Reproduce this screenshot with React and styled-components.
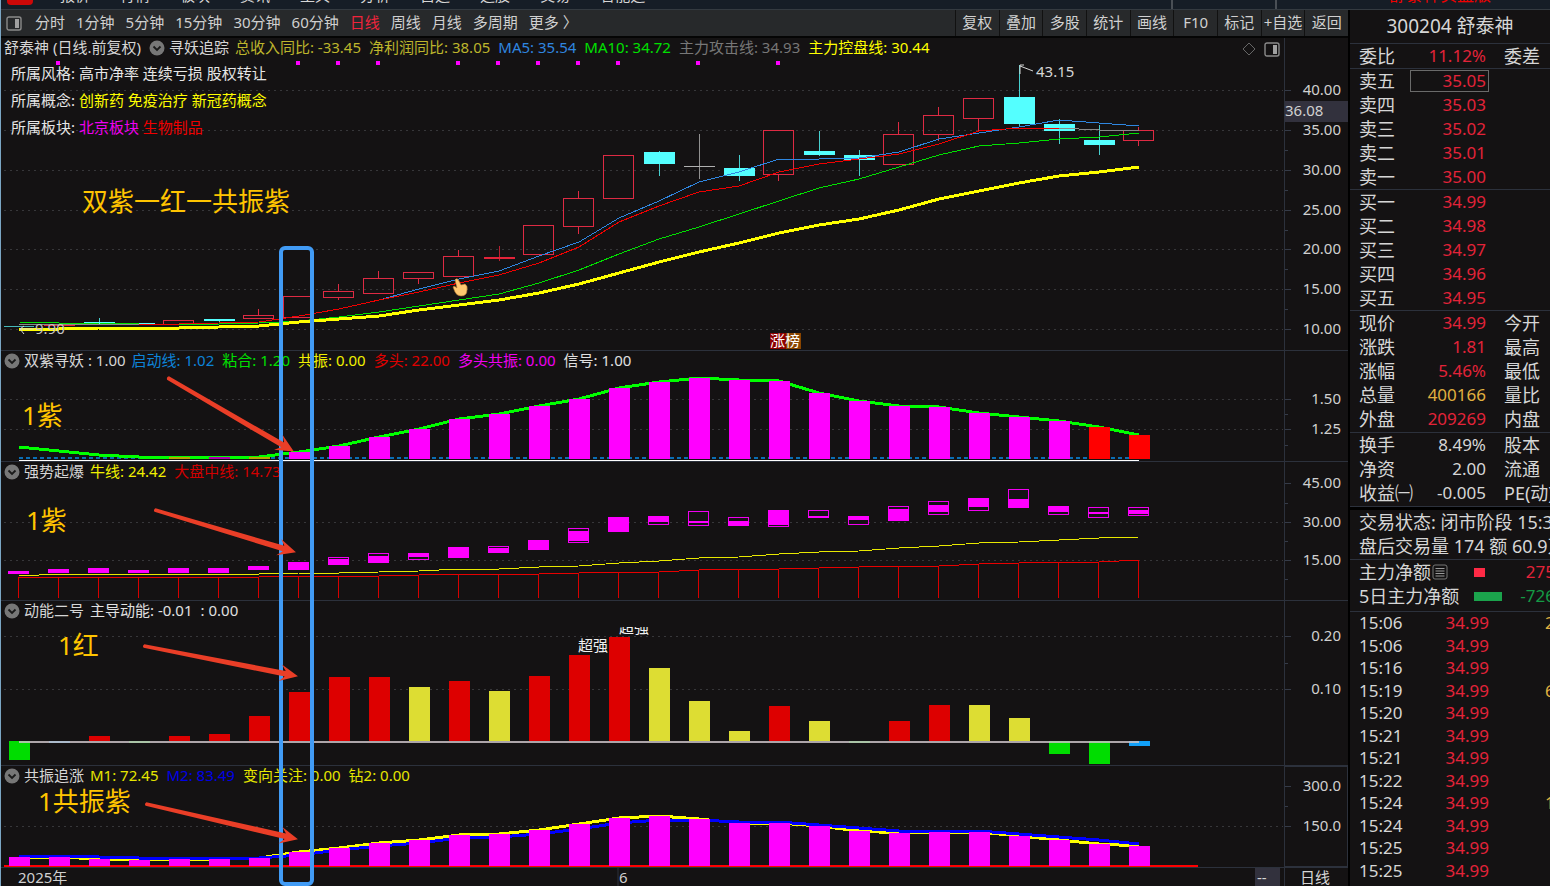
import React from "react";
import styled, { createGlobalStyle } from "styled-components";

const FONT = '"Noto Sans", "Noto Sans CJK SC", sans-serif';

const GlobalStyle = createGlobalStyle`
    * { box-sizing: border-box; }
    body {
        margin: 0;
        background: #000;
        overflow: hidden;
        font-family: ${FONT};
    }
    button {
        font-family: inherit;
    }
`;

const menus = ["报价", "行情", "板块", "资讯", "工具", "分析", "自选", "选股", "交易", "智能选"];

const periods = ["分时", "1分钟", "5分钟", "15分钟", "30分钟", "60分钟", "日线", "周线", "月线", "多周期", "更多 〉"];

const tools = ["复权", "叠加", "多股", "统计", "画线", "F10", "标记", "+自选", "返回"];

const RED = "#e32339";
const UP = "#de2a43";
const DOWN = "#54ffff";
const PURPLE = "#ff00ff";

// x of the n-th trading day
const cx = (i) => 19 + i * 40;

// kind, body top, body bottom, wick top, wick bottom
const candles = [
    ["none", 0, 0, 0, 0],
    ["flat", 325, 326, 325, 326],
    ["down", 322, 324, 318, 324],
    ["down", 323, 324, 323, 324],
    ["up", 320, 324, 320, 324],
    ["down", 319, 321, 319, 323],
    ["up", 315, 318, 309, 318],
    ["up", 296, 317, 296, 317],
    ["up", 291, 297, 284, 300],
    ["up", 278, 293, 271, 293],
    ["up", 272, 278, 272, 284],
    ["up", 256, 276, 250, 276],
    ["flat", 257, 259, 246, 261],
    ["up", 225, 254, 225, 254],
    ["up", 198, 226, 191, 234],
    ["up", 155, 198, 155, 198],
    ["down", 152, 164, 151, 176],
    ["doji", 166, 167, 134, 179],
    ["down", 168, 176, 155, 181],
    ["up", 130, 174, 130, 181],
    ["down", 151, 155, 131, 156],
    ["down", 155, 160, 150, 176],
    ["up", 134, 164, 122, 164],
    ["up", 115, 134, 107, 141],
    ["up", 98, 118, 98, 131],
    ["down", 97, 124, 65, 127],
    ["down", 124, 131, 119, 144],
    ["down", 140, 145, 125, 155],
    ["up", 130, 140, 127, 146],
];

const ma5 = [300, 289, 279, 271, 256, 242, 218, 201, 182, 172, 159, 159, 158, 152, 139, 133, 127, 120, 123, 126];
const attack = [324, 324, 323, 322, 316, 309, 300, 292, 283, 275, 263, 247, 222, 206, 192, 186, 172, 164, 159, 154, 144, 131, 128, 128];
const ma10 = [322, 323, 323, 324, 324, 324, 323, 321, 317, 312, 306, 300, 294, 283, 270, 254, 239, 227, 214, 201, 188, 179, 167, 155, 146, 143, 139, 137, 133];
const control = [329, 329, 328, 328, 328, 327, 326, 322, 319, 316, 310, 305, 300, 293, 284, 273, 262, 252, 243, 233, 225, 219, 210, 199, 191, 183, 176, 172, 167];

const signalDays = [1, 7, 8, 9, 11, 12, 13, 14, 15, 17, 19];

const bondLine = [447, 451, 455, 457, 457, 457, 457, 452, 446, 437, 429, 419, 414, 406, 399, 388, 382, 378, 380, 381, 393, 401, 406, 407, 413, 417, 421, 427, 435];

// outer box top/bottom, filled part top/bottom
const burst = [
    [571, 574, 571, 574], [569, 573, 569, 573], [568, 573, 568, 573], [570, 573, 570, 573],
    [568, 573, 568, 573], [568, 573, 568, 573], [566, 570, 566, 570], [562, 570, 562, 570],
    [557, 565, 559, 565], [553, 563, 556, 563], [553, 560, 553, 557], [547, 558, 547, 558],
    [546, 553, 548, 553], [540, 550, 540, 550], [528, 543, 531, 541], [517, 532, 517, 532],
    [516, 525, 516, 522], [511, 526, 521, 523], [517, 526, 521, 526], [510, 527, 510, 525],
    [510, 518, 516, 518], [516, 525, 516, 520], [506, 521, 509, 521], [501, 515, 505, 512],
    [498, 511, 498, 507], [489, 508, 499, 508], [506, 515, 506, 512], [507, 518, 512, 514],
    [507, 516, 510, 514],
];
const bull = [576, 574, 574, 574, 574, 574, 574, 573, 573, 572, 571, 569, 569, 567, 566, 563, 561, 558, 557, 554, 552, 551, 548, 546, 543, 542, 540, 538, 537];
const midline = [577, 577, 577, 577, 577, 577, 577, 576, 576, 576, 575, 574, 574, 574, 573, 572, 572, 570, 569, 569, 568, 567, 566, 566, 564, 563, 562, 562, 560];

const R = "#dd0000";
const Y = "#dddd33";
const G = "#00dd00";
const B = "#11a0f8";
const power = [
    [760, G], [743, B], [736, R], [743, G], [736, R], [734, R], [716, R], [692, R], [677, R], [677, R],
    [687, Y], [681, R], [691, Y], [676, R], [655, R], [637, R], [668, Y], [701, Y], [731, Y], [706, R],
    [721, Y], [743, G], [721, R], [705, R], [705, Y], [718, Y], [754, G], [764, G], [746, B],
];

const m1 = [857, 857, 859, 860, 859, 859, 858, 852, 848, 843, 840, 835, 834, 830, 824, 818, 816, 819, 823, 823, 826, 831, 833, 832, 832, 836, 840, 844, 846];
const m2 = [856, 856, 857, 858, 858, 858, 858, 855, 850, 846, 843, 838, 837, 834, 829, 823, 820, 820, 822, 822, 825, 828, 831, 831, 831, 834, 837, 840, 844];

const sells = [["卖五", "35.05"], ["卖四", "35.03"], ["卖三", "35.02"], ["卖二", "35.01"], ["卖一", "35.00"]];
const buys = [["买一", "34.99"], ["买二", "34.98"], ["买三", "34.97"], ["买四", "34.96"], ["买五", "34.95"]];
const quotes = [
    ["现价", "34.99", "今开"],
    ["涨跌", "1.81", "最高"],
    ["涨幅", "5.46%", "最低"],
    ["总量", "400166", "量比", "#e0b040"],
    ["外盘", "209269", "内盘"],
];
const basics = [
    ["换手", "8.49%", "股本", "#d6d6d6"],
    ["净资", "2.00", "流通", "#d6d6d6"],
    ["收益㈠", "-0.005", "PE(动)", "#d6d6d6"],
];
const ticks = [
    ["15:06", "2"], ["15:06", ""], ["15:16", ""], ["15:19", "6"], ["15:20", ""], ["15:21", ""], ["15:21", ""],
    ["15:22", ""], ["15:24", "1"], ["15:24", ""], ["15:25", ""], ["15:25", ""], ["15:26", ""],
];

const toPoints = (ys, from = 0) => ys.map((y, i) => `${cx(i + from)},${y}`).join(" ");

function Line({ ys, from, color, width = 1 }) {
    return <polyline points={toPoints(ys, from)} fill="none" stroke={color} strokeWidth={width} />;
}

function Fold() {
    return (
        <FoldIcon viewBox="0 0 16 16">
            <circle cx="8" cy="8" r="7.5" fill="#777" />
            <path d="M4.5 6.5 L8 10 L11.5 6.5" fill="none" stroke="#1a1a1a" strokeWidth="1.8" />
        </FoldIcon>
    );
}

function SideIcon() {
    return (
        <svg width="16" height="15" viewBox="0 0 16 15">
            <rect x="1" y="1" width="14" height="13" rx="2" fill="none" stroke="#8a8a8a" strokeWidth="1.4" />
            <rect x="9" y="3" width="4" height="9" fill="#a0a0a0" />
        </svg>
    );
}

// one indicator window: header, plot and price scale. top is its y on the board
function Pane({ top, height, items, title, name, marks, minors = [], boxed, grid, children, axisExtra, extra }) {
    return (
        <PaneRow>
            <PlotColumn>
                <PaneHeader>
                    {title && <span>{title}</span>}
                    <Fold />
                    <PaneName>{name}</PaneName>
                    {items.map(([text, color]) => (
                        <Reading key={text} $color={color}>{text}</Reading>
                    ))}
                </PaneHeader>
                <Plot height={height - 20}>
                    <g transform={`translate(-1 ${-top - 20})`} shapeRendering="crispEdges">
                        {grid.map((y) => (
                            <line key={y} x1="4" x2="100%" y1={y + 0.5} y2={y + 0.5} stroke="#37373a" strokeDasharray="2 4" />
                        ))}
                        {children}
                    </g>
                </Plot>
                {extra}
            </PlotColumn>
            <Scale $boxed={boxed} height={height}>
                <g transform={`translate(-1285 ${-top})`}>
                    {marks.map(([label, y]) => (
                        <g key={label}>
                            <line x1="1285" x2="1291" y1={y + 0.5} y2={y + 0.5} stroke="#353b48" />
                            <text x="1341" y={y + 5} textAnchor="end">{label}</text>
                        </g>
                    ))}
                    {minors.map((y) => (
                        <line key={y} x1="1285" x2="1288" y1={y + 0.5} y2={y + 0.5} stroke="#353b48" />
                    ))}
                    {axisExtra}
                </g>
            </Scale>
        </PaneRow>
    );
}

function Candle({ i, data }) {
    const [kind, top, bottom, high, low] = data;
    const x = cx(i);
    if (kind === "none") return null;
    if (kind === "up") {
        return (
            <g stroke={UP} fill="none">
                <rect x={x - 16 + 0.5} y={top + 0.5} width="30" height={bottom - top} />
                {high < top && <line x1={x - 0.5} x2={x - 0.5} y1={high} y2={top} />}
                {low > bottom && <line x1={x - 0.5} x2={x - 0.5} y1={bottom} y2={low} />}
            </g>
        );
    }
    const color = kind === "down" ? DOWN : kind === "flat" ? RED : "#b0b0b0";
    return (
        <g fill={color}>
            <rect x={x - 15} y={top} width="31" height={bottom - top} />
            <rect x={x} y={high} width="1" height={low - high} opacity="0.8" />
        </g>
    );
}

function Arrow({ x1, y1, x2, y2 }) {
    const len = Math.hypot(x2 - x1, y2 - y1);
    const deg = (Math.atan2(y2 - y1, x2 - x1) * 180) / Math.PI;
    return (
        <g transform={`translate(${x1} ${y1}) rotate(${deg})`} fill="#ea3e27">
            <path d={`M0 -1.9 L${len - 12} -2.8 L${len - 17} -8.5 L${len + 1} 0 L${len - 17} 8.5 L${len - 12} 2.8 L0 1.9 Q-2 0 0 -1.9Z`} />
        </g>
    );
}

function QuoteRows({ rows }) {
    return rows.map(([label, value, side, color]) => (
        <tr key={label}>
            <Name scope="row">{label}</Name>
            <Value $color={color}>{value}</Value>
            <Side>{side}</Side>
        </tr>
    ));
}

export default function App() {
    return (
        <>
            <GlobalStyle />
            <Window>
                <MenuBar>
                    <Logo />
                    <Menus>
                        {menus.map((m) => <span key={m}>{m}</span>)}
                    </Menus>
                    <MenuGap />
                    <MenuSlot />
                    <Account>舒泰神实盘版</Account>
                </MenuBar>
                <Body>
                    <Main>
                        <Toolbar>
                            <Periods>
                                <IconButton aria-label="侧栏"><SideIcon /></IconButton>
                                {periods.map((p) => (
                                    <PeriodButton key={p} $active={p === "日线"}>{p}</PeriodButton>
                                ))}
                            </Periods>
                            <Tools>
                                {tools.map((t) => <ToolButton key={t}>{t}</ToolButton>)}
                            </Tools>
                        </Toolbar>
                        <Board>
                            <Pane
                                top={38}
                                height={312}
                                title="舒泰神 (日线.前复权)"
                                name="寻妖追踪"
                                items={[
                                    ["总收入同比: -33.45", "#bdb52c"],
                                    ["净利润同比: 38.05", "#bdb52c"],
                                    ["MA5: 35.54", "#2f86e0"],
                                    ["MA10: 34.72", "#00e000"],
                                    ["主力攻击线: 34.93", "#777777"],
                                    ["主力控盘线: 30.44", "#ffff00"],
                                ]}
                                grid={[90, 130, 170, 210, 249, 289, 329]}
                                marks={[["40.00", 90], ["35.00", 130], ["30.00", 170], ["25.00", 210], ["20.00", 249], ["15.00", 289], ["10.00", 329]]}
                                minors={[150, 190, 230, 269, 309]}
                                axisExtra={
                                    <g>
                                        <rect x="1285" y="101" width="63" height="21" fill="#32313d" />
                                        <text x="1285" y="116">36.08</text>
                                    </g>
                                }
                                extra={
                                    <>
                                        <Notes>
                                            <div>所属风格: 高市净率 连续亏损 股权转让</div>
                                            <div>所属概念: <Reading $color="#ffff00">创新药 免疫治疗 新冠药概念</Reading></div>
                                            <div>所属板块: <Reading $color="#f000f0">北京板块</Reading> <Reading $color="#f00000">生物制品</Reading></div>
                                        </Notes>
                                        <Corner>
                                            <svg width="14" height="14" viewBox="0 0 14 14">
                                                <path d="M7 1 L13 7 L7 13 L1 7Z" fill="none" stroke="#666" />
                                            </svg>
                                            <SideIcon />
                                        </Corner>
                                    </>
                                }
                            >
                                {signalDays.map((d) => <rect key={d} x={cx(d) - 3} y="61" width="4" height="4" fill={PURPLE} />)}
                                <rect x="4" y="326" width="30" height="1" fill="#45b8b8" />
                                {candles.map((c, i) => <Candle key={i} i={i} data={c} />)}
                                <Line ys={[324.5, 324.5, 324.5, 324.5]} color="#8a8a8a" />
                                <Line ys={ma5} from={9} color="#2f86e0" />
                                <Line ys={ma10} color="#00e000" />
                                <Line ys={attack} from={3} color="#f00000" />
                                <Line ys={[128, 130, 130]} from={26} color="#8a8a8a" />
                                <Line ys={control} color="#ffff00" width={3} />
                                <path d="M20 329 H34 M20 329 L24 334 M20 329 L24 326" stroke="#d6d6d6" fill="none" shapeRendering="auto" />
                                <text x="35" y="334" fill="#c4c4c4">9.90</text>
                                <path d="M1033 71 L1020 66 M1020 74 V65 H1024" stroke="#d6d6d6" fill="none" shapeRendering="auto" />
                                <text x="1036" y="77" fill="#d6d6d6">43.15</text>
                                <rect x="770" y="333" width="16" height="16" fill="#8b0000" />
                                <rect x="786" y="333" width="15" height="16" fill="#8a4500" />
                                <text x="770" y="346" fill="#fff">涨榜</text>
                            </Pane>

                            <Pane
                                top={351}
                                height={110}
                                name="双紫寻妖 : 1.00"
                                items={[
                                    ["启动线: 1.02", "#0d83d8"],
                                    ["粘合: 1.20", "#00e000"],
                                    ["共振: 0.00", "#f0f000"],
                                    ["多头: 22.00", "#e00000"],
                                    ["多头共振: 0.00", "#f000f0"],
                                    ["信号: 1.00", "#e0e0e0"],
                                ]}
                                grid={[399, 429]}
                                marks={[["1.50", 399], ["1.25", 429]]}
                                minors={[414, 445]}
                            >
                                <line x1="19" x2="1139" y1="458" y2="458" stroke="#0a6eb4" strokeWidth="2" strokeDasharray="4 3" />
                                <Line ys={bondLine} color="#00ff00" width={3} />
                                {bondLine.map((y, i) => (
                                    i > 6 && <rect key={i} x={cx(i) - 10} y={y} width="21" height={459 - y} fill={i > 26 ? "#ff0000" : PURPLE} />
                                ))}
                                <rect x="169" y="457" width="21" height="2" fill="#b8a800" />
                                <rect x="209" y="457" width="21" height="2" fill="#b000b0" />
                                <rect x="249" y="457" width="21" height="2" fill="#b8a800" />
                                <rect x="19" y="460" width="1120" height="1" fill="#ffffff" />
                            </Pane>

                            <Pane
                                top={462}
                                height={138}
                                name="强势起爆"
                                items={[["牛线: 24.42", "#f0f000"], ["大盘中线: 14.73", "#d00000"]]}
                                grid={[522, 560]}
                                marks={[["45.00", 483], ["30.00", 522], ["15.00", 560]]}
                                minors={[503, 541, 579]}
                            >
                                {midline.map((y, i) => <rect key={i} x={cx(i) - 1} y={y} width="1" height={598 - y} fill="#d80000" />)}
                                <Line ys={midline} color="#e80000" />
                                <Line ys={bull} color="#e8e800" />
                                {burst.map(([top, bottom, from, to], i) => (
                                    <g key={i}>
                                        <rect x={cx(i) - 11 + 0.5} y={top + 0.5} width="20" height={bottom - top - 1} fill="#141213" stroke="#f000f0" />
                                        <rect x={cx(i) - 11} y={from} width="21" height={to - from} fill={PURPLE} />
                                    </g>
                                ))}
                            </Pane>

                            <Pane
                                top={601}
                                height={164}
                                name="动能二号"
                                items={[["主导动能: -0.01", "#e0e0e0"], [": 0.00", "#e0e0e0"]]}
                                grid={[636, 689]}
                                marks={[["0.20", 636], ["0.10", 689]]}
                                minors={[663]}
                            >
                                <text x="578" y="651" fill="#f0f0f0">超强</text>
                                <svg x="600" y="627" width="60" height="10">
                                    <text x="19" y="6" fill="#f0f0f0">超强</text>
                                </svg>
                                {power.map(([y, color], i) => (
                                    <rect key={i} x={cx(i) - 10} y={Math.min(y, 741)} width="21" height={Math.abs(y - 741)} fill={color} />
                                ))}
                                <rect x="19" y="741" width="1120" height="2" fill="#c8bfc4" opacity="0.85" />
                            </Pane>

                            <Pane
                                top={766}
                                height={101}
                                name="共振追涨"
                                items={[
                                    ["M1: 72.45", "#e6e600"],
                                    ["M2: 83.49", "#0000e6"],
                                    ["变向关注: 0.00", "#e6e600"],
                                    ["钻2: 0.00", "#e6e600"],
                                ]}
                                grid={[826]}
                                marks={[["300.0", 786], ["150.0", 826]]}
                                minors={[806]}
                                boxed
                            >
                                <Line ys={m1} color="#ffff00" width={3} />
                                <Line ys={m2} color="#0000ff" width={3} />
                                <rect x="4" y="865" width="1194" height="2" fill="#ff0000" />
                                {m1.map((y, i) => <rect key={i} x={cx(i) - 10} y={y} width="21" height={866 - y} fill={PURPLE} />)}
                            </Pane>

                            <TimeRow>
                                <TimePlot height="18">
                                    <text x="17" y="15">2025年</text>
                                    <line x1="617" x2="617" y1="0" y2="18" stroke="#2c313c" />
                                    <text x="618" y="15">6</text>
                                </TimePlot>
                                <TimeCursor>--</TimeCursor>
                                <TimeUnit>日线</TimeUnit>
                            </TimeRow>

                            <Overlay>
                                <g transform="translate(-1 -38)">
                                    <rect x="281" y="248" width="31" height="636" rx="4" fill="none" stroke="#419bf5" strokeWidth="4" />
                                    <Arrow x1={168} y1={378} x2={293} y2={451} />
                                    <Arrow x1={155} y1={510} x2={295} y2={552} />
                                    <Arrow x1={144} y1={646} x2={297} y2={676} />
                                    <Arrow x1={146} y1={804} x2={297} y2={839} />
                                    <path
                                        d="M455 280 Q457 277 459 281 L461 285 L465 284 Q468 286 467 290 Q467 296 461 296 Q457 296 455 292 L453 287 Q454 285 457 288Z"
                                        fill="#ffc870"
                                        stroke="#b87830"
                                        strokeWidth="0.6"
                                    />
                                    <text x="82" y="211">双紫一红一共振紫</text>
                                    <text x="22" y="425">1紫</text>
                                    <text x="26" y="530">1紫</text>
                                    <text x="58" y="655">1红</text>
                                    <text x="38" y="811">1共振紫</text>
                                </g>
                            </Overlay>
                        </Board>
                    </Main>

                    <Panel>
                        <StockTitle>300204 舒泰神</StockTitle>
                        <Section>
                            <DataTable><tbody><QuoteRows rows={[["委比", "11.12%", "委差"]]} /></tbody></DataTable>
                        </Section>
                        <Section>
                            <DataTable>
                                <tbody>
                                    {sells.map(([label, price], i) => (
                                        <tr key={label}>
                                            <Name scope="row">{label}</Name>
                                            <Value>{i === 0 ? <Picked>{price}</Picked> : price}</Value>
                                            <Side />
                                        </tr>
                                    ))}
                                </tbody>
                            </DataTable>
                        </Section>
                        <Section>
                            <DataTable><tbody><QuoteRows rows={buys} /></tbody></DataTable>
                        </Section>
                        <Section $bottom={1}>
                            <DataTable><tbody><QuoteRows rows={quotes} /></tbody></DataTable>
                        </Section>
                        <Section $bottom={1}>
                            <DataTable><tbody><QuoteRows rows={basics} /></tbody></DataTable>
                        </Section>
                        <Divider />
                        <Section $bottom={1}>
                            <StatusLine>交易状态: 闭市阶段 15:30</StatusLine>
                            <StatusLine>盘后交易量 174 额 60.9万</StatusLine>
                        </Section>
                        <Section $bottom={3}>
                            <FlowRow>
                                <FlowName>
                                    主力净额
                                    <svg width="16" height="16" viewBox="0 0 16 16">
                                        <rect x="1" y="1" width="14" height="14" rx="2" fill="none" stroke="#777" />
                                        <path d="M3.5 4.5 H12.5 M3.5 7 H12.5 M3.5 9.5 H12.5 M3.5 12 H12.5" stroke="#999" />
                                    </svg>
                                </FlowName>
                                <Swatch $width={11} $color="#ff2a45" />
                                <FlowValue $color={RED}>275</FlowValue>
                            </FlowRow>
                            <FlowRow>
                                <FlowName>5日主力净额</FlowName>
                                <Swatch $width={28} $color="#1ba34c" />
                                <FlowValue $color="#159a45">-726</FlowValue>
                            </FlowRow>
                        </Section>
                        <TickTable>
                            <tbody>
                                {ticks.map(([time, volume], i) => (
                                    <tr key={i}>
                                        <TickTime>{time}</TickTime>
                                        <TickPrice>34.99</TickPrice>
                                        <TickVolume>{volume}</TickVolume>
                                    </tr>
                                ))}
                            </tbody>
                        </TickTable>
                    </Panel>
                </Body>
            </Window>
        </>
    );
}

const Window = styled.div`
    display: flex;
    flex-direction: column;
    height: 100vh;
    overflow: hidden;
    border-left: 1px solid #7ba6c4;
    color: #d6d6d6;
    font-size: 15px;
    white-space: nowrap;
`;

const MenuBar = styled.div`
    display: flex;
    align-items: flex-end;
    flex: none;
    height: 10px;
    overflow: hidden;
    background: #161d26;
    border-bottom: 1px solid #343a40;
    line-height: 20px;
`;

const Logo = styled.div`
    width: 26px;
    height: 20px;
    margin: 0 27px 4px 6px;
    background: #cc0808;
    border-radius: 4px;
`;

const Menus = styled.div`
    display: flex;
    gap: 30px;
    padding-bottom: 4px;
`;

const MenuGap = styled.div`
    flex: 1;
    height: 9px;
    border-right: 2px solid #4a4f55;
`;

const MenuSlot = styled.div`
    width: 104px;
    height: 9px;
    border-right: 2px solid #4a4f55;
`;

const Account = styled.div`
    width: 273px;
    padding: 0 0 4px 112px;
    color: #f00000;
    font-size: 17px;
`;

const Body = styled.div`
    display: flex;
    flex: 1;
    min-height: 0;
    gap: 2px;
    background: #000;
`;

const Main = styled.div`
    flex: 1;
    min-width: 0;
`;

const Toolbar = styled.div`
    display: flex;
    justify-content: space-between;
    height: 28px;
    background: #27292b;
    border-bottom: 2px solid #050505;
`;

const Periods = styled.div`
    display: flex;
    align-items: center;
    gap: 11px;
    padding-left: 5px;
`;

const IconButton = styled.button`
    display: flex;
    width: 18px;
    padding: 0;
    border: 0;
    background: none;
`;

const PeriodButton = styled.button`
    padding: 0 0 2px;
    border: 0;
    background: none;
    color: ${(p) => (p.$active ? "#f0243c" : "#d0d0d0")};
    font-size: 15px;
    line-height: 24px;
`;

const Tools = styled.div`
    display: grid;
    grid-template-columns: repeat(9, 1fr);
    width: 393px;
`;

const ToolButton = styled.button`
    padding: 0 0 2px;
    border: 0;
    border-left: 1px solid #111;
    background: #27292b;
    color: #d0d0d0;
    font-size: 15px;
    line-height: 24px;
`;

const Board = styled.div`
    position: relative;
    background: #141213;
`;

const PaneRow = styled.div`
    display: grid;
    grid-template-columns: 1fr 64px;
    border-bottom: 1px solid #2c313c;
`;

const PlotColumn = styled.div`
    position: relative;
    min-width: 0;
`;

const PaneHeader = styled.div`
    display: flex;
    align-items: center;
    gap: 8px;
    height: 20px;
    padding-left: 3px;
    line-height: 18px;

    span {
        padding-bottom: 2px;
    }
`;

const PaneName = styled.span`
    margin-right: -2px;
`;

const FoldIcon = styled.svg`
    flex: none;
    width: 16px;
    height: 16px;
    margin-right: -4px;
`;

const Reading = styled.span`
    color: ${(p) => p.$color};
`;

const Plot = styled.svg`
    display: block;
    width: 100%;
    overflow: hidden;
    font-size: 15px;
`;

const Scale = styled.svg`
    display: block;
    width: 64px;
    border-left: 1px solid #2c313c;
    outline: ${(p) => (p.$boxed ? "1px solid #2c313c" : "none")};
    outline-offset: -1px;
    fill: #d0d0d0;
    font-size: 15px;
`;

const Notes = styled.div`
    position: absolute;
    top: 22px;
    left: 10px;
    line-height: 27px;
    color: #e6e6e6;
`;

const Corner = styled.div`
    position: absolute;
    top: 4px;
    right: 4px;
    display: flex;
    gap: 8px;
`;

const TimeRow = styled.div`
    display: flex;
    height: 18px;
    line-height: 18px;
`;

const TimePlot = styled.svg`
    flex: 1;
    min-width: 0;
    fill: #d0d0d0;
    font-size: 15px;
`;

const TimeCursor = styled.div`
    width: 25px;
    margin-right: 4px;
    padding-left: 2px;
    background: #32313d;
`;

const TimeUnit = styled.div`
    width: 64px;
    padding-left: 15px;
    border-left: 1px solid #2c313c;
`;

const Overlay = styled.svg`
    position: absolute;
    inset: 0;
    width: 100%;
    height: 100%;
    pointer-events: none;
    fill: #ffc400;
    font-size: 26px;
`;

const Panel = styled.aside`
    width: 200px;
    overflow: hidden;
    background: #141213;
    font-size: 18px;
`;

const StockTitle = styled.div`
    height: 34px;
    border-bottom: 1px solid #2c313c;
    font-size: 19px;
    line-height: 33px;
    text-align: center;
`;

const Section = styled.div`
    padding: 0 0 ${(p) => p.$bottom || 0}px 9px;
    border-bottom: 1px solid #2c313c;
`;

const DataTable = styled.table`
    width: 240px;
    border-collapse: collapse;
    table-layout: fixed;
    line-height: 24px;

    td, th {
        height: 24px;
        padding: 0;
    }
`;

const Name = styled.th`
    width: 51px;
    font-weight: 400;
    text-align: left;
`;

const Value = styled.td`
    width: 76px;
    color: ${(p) => p.$color || RED};
    font-size: 17px;
    text-align: right;
`;

const Picked = styled.div`
    height: 22px;
    margin-right: -3px;
    padding-right: 2px;
    border: 1px solid #6a6a6a;
    line-height: 20px;
`;

const Side = styled.td`
    && {
        padding-left: 18px;
    }
`;

const Divider = styled.div`
    height: 3px;
    background: #000;
`;

const StatusLine = styled.div`
    line-height: 24px;
`;

const FlowRow = styled.div`
    display: grid;
    grid-template-columns: 115px 30px 51px;
    align-items: center;
    width: 196px;
    line-height: 24px;
`;

const FlowName = styled.div`
    display: flex;
    align-items: center;
    gap: 1px;
`;

const Swatch = styled.div`
    width: ${(p) => p.$width}px;
    height: 9px;
    background: ${(p) => p.$color};
`;

const FlowValue = styled.div`
    color: ${(p) => p.$color};
    font-size: 17px;
    text-align: right;
`;

const TickTable = styled.table`
    width: 240px;
    margin-left: 9px;
    border-collapse: collapse;
    table-layout: fixed;
    font-size: 17px;
    line-height: 22px;

    td {
        height: 22px;
        padding: 0;
    }

    tr:nth-child(even) td {
        height: 23px;
    }
`;

const TickTime = styled.td`
    width: 51px;
`;

const TickPrice = styled.td`
    width: 79px;
    color: ${RED};
    text-align: right;
`;

const TickVolume = styled.td`
    && {
        padding-left: 56px;
    }
    color: #e0b040;
`;
